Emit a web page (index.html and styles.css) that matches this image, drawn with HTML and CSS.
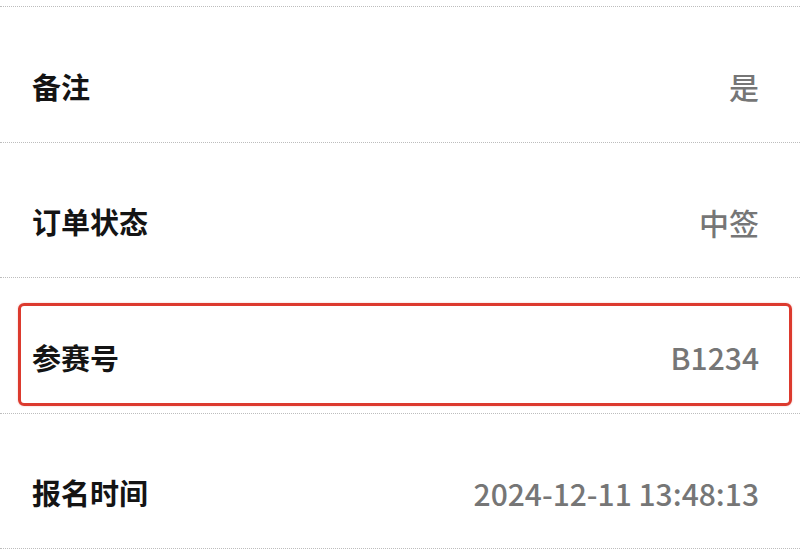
FILE: index.html
```html
<!DOCTYPE html>
<html lang="zh-CN">
<head>
<meta charset="utf-8">
<title>订单详情</title>
<link rel="stylesheet" href="styles.css">
</head>
<body>
<div class="list">
  <div class="row">
    <div class="inner">
      <span class="label">备注</span>
      <span class="value">是</span>
    </div>
  </div>
  <div class="row">
    <div class="inner">
      <span class="label">订单状态</span>
      <span class="value">中签</span>
    </div>
  </div>
  <div class="row">
    <div class="inner highlight">
      <span class="label">参赛号</span>
      <span class="value">B1234</span>
    </div>
  </div>
  <div class="row">
    <div class="inner">
      <span class="label">报名时间</span>
      <span class="value">2024-12-11 13:48:13</span>
    </div>
  </div>
</div>
</body>
</html>
```

FILE: styles.css
```css
html, body {
  margin: 0;
  padding: 0;
  background: #ffffff;
}
body {
  font-family: "Noto Sans CJK SC", "Noto Sans", sans-serif;
  overflow: hidden;
}
.list {
  margin-top: 6px;
  border-top: 1px dotted #bdbdbd;
}
.row {
  height: 134.5px;
  border-bottom: 1px dotted #bdbdbd;
  box-sizing: content-box;
  display: flex;
  flex-direction: column;
}
.inner {
  margin: 25px 8px 7px 18px;
  height: 103px;
  box-sizing: border-box;
  border: 3px solid transparent;
  border-radius: 6px;
  padding: 6px 30px 0 11px;
  display: flex;
  align-items: center;
  justify-content: space-between;
}
.inner.highlight {
  border-color: #dc3a2e;
  box-shadow: 0 0 2px rgba(220, 58, 46, 0.35);
}
.label {
  font-size: 29px;
  font-weight: 700;
  color: #141414;
  line-height: 1;
}
.value {
  font-size: 30px;
  font-weight: 500;
  color: #767676;
  line-height: 1;
}
```
